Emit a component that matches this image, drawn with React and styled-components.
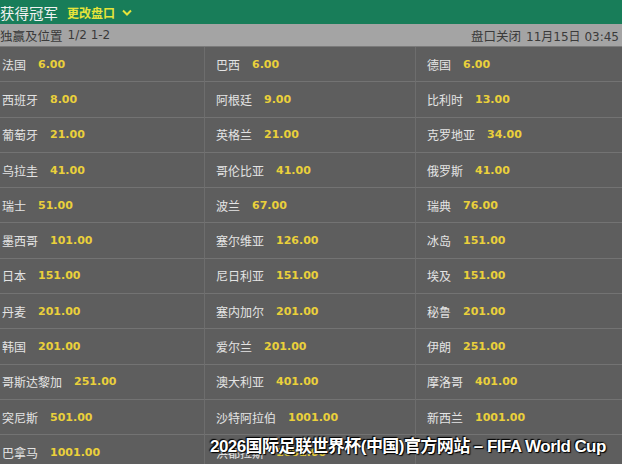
import React from 'react';
import styled, { createGlobalStyle } from 'styled-components';

const GlobalStyle = createGlobalStyle`
  html, body {
    margin: 0;
    padding: 0;
    background: #5e5e5e;
    overflow: hidden;
  }
  body {
    font-family: "Liberation Sans", "Noto Sans CJK SC", sans-serif;
  }
`;

const Page = styled.div`
  position: relative;
  width: 622px;
  height: 464px;
  overflow: hidden;
  background: #5e5e5e;
`;

const TopBar = styled.div`
  height: 24px;
  background: #187d59;
  display: flex;
  align-items: center;
  gap: 9px;
  padding-top: 1px;
  box-sizing: border-box;
`;

const Title = styled.span`
  color: #f2f2f2;
  font-size: 14.5px;
  font-family: "Noto Sans CJK SC", sans-serif;
`;

const ChangeLink = styled.span`
  color: #e6e43a;
  font-size: 12px;
  font-weight: bold;
  font-family: "Noto Sans CJK SC", sans-serif;
  display: flex;
  align-items: center;
  gap: 7px;
`;

const SubBar = styled.div`
  height: 22px;
  background: #a4a4a4;
  color: #3a3a3a;
  display: flex;
  align-items: center;
  justify-content: space-between;
  padding-right: 3px;
  font-size: 12px;
  font-family: "DejaVu Sans", "Noto Sans CJK SC", sans-serif;
  border-bottom: 1px solid #7a7a7a;
`;

const SubPart = styled.span`
  display: flex;
  align-items: center;
  gap: 5px;
  & b {
    font-weight: normal;
    font-size: 12.5px;
    font-family: "Noto Sans CJK SC", sans-serif;
  }
`;

const Grid = styled.div`
  display: grid;
  grid-template-columns: 205px 211px 1fr;
  grid-auto-rows: 35.3px;
`;

const Cell = styled.div`
  display: flex;
  align-items: center;
  gap: 12px;
  padding-left: ${p => (p.$first ? '2px' : '11px')};
  border-bottom: 1px solid #737373;
  border-right: ${p => (p.$last ? 'none' : '1px solid #6d6d6d')};
  box-sizing: border-box;
`;

const Name = styled.span`
  color: #e4e4e4;
  font-size: 12px;
  font-family: "Noto Sans CJK SC", sans-serif;
`;

const Odds = styled.span`
  color: #ead03b;
  font-size: 11px;
  font-weight: bold;
  font-family: "DejaVu Sans", sans-serif;
`;

const Watermark = styled.div`
  position: absolute;
  left: 210px;
  top: 432px;
  color: #ffffff;
  font-size: 17px;
  font-weight: bold;
  font-family: "Liberation Sans", "Noto Sans CJK SC", sans-serif;
  letter-spacing: -0.55px;
  white-space: nowrap;
  text-shadow: 0 0 2px #000, 1px 1px 1px #000, -1px -1px 1px #000;
`;

const teams = [
  ['法国', '6.00'], ['巴西', '6.00'], ['德国', '6.00'],
  ['西班牙', '8.00'], ['阿根廷', '9.00'], ['比利时', '13.00'],
  ['葡萄牙', '21.00'], ['英格兰', '21.00'], ['克罗地亚', '34.00'],
  ['乌拉圭', '41.00'], ['哥伦比亚', '41.00'], ['俄罗斯', '41.00'],
  ['瑞士', '51.00'], ['波兰', '67.00'], ['瑞典', '76.00'],
  ['墨西哥', '101.00'], ['塞尔维亚', '126.00'], ['冰岛', '151.00'],
  ['日本', '151.00'], ['尼日利亚', '151.00'], ['埃及', '151.00'],
  ['丹麦', '201.00'], ['塞内加尔', '201.00'], ['秘鲁', '201.00'],
  ['韩国', '201.00'], ['爱尔兰', '201.00'], ['伊朗', '251.00'],
  ['哥斯达黎加', '251.00'], ['澳大利亚', '401.00'], ['摩洛哥', '401.00'],
  ['突尼斯', '501.00'], ['沙特阿拉伯', '1001.00'], ['新西兰', '1001.00'],
  ['巴拿马', '1001.00'], ['洪都拉斯', '1001.00'], ['', ''],
];

const Chevron = () => (
  <svg width="10" height="7" viewBox="0 0 10 7">
    <path d="M1 1.5 L5 5.5 L9 1.5" fill="none" stroke="#e6e43a" strokeWidth="2" />
  </svg>
);

const App = () => (
  <Page>
    <GlobalStyle />
    <TopBar>
      <Title>获得冠军</Title>
      <ChangeLink>
        更改盘口 <Chevron />
      </ChangeLink>
    </TopBar>
    <SubBar>
      <SubPart>
        <b>独赢及位置</b>
        <span>1/2 1-2</span>
      </SubPart>
      <SubPart>
        <b>盘口关闭</b>
        <span>11月15日 03:45</span>
      </SubPart>
    </SubBar>
    <Grid>
      {teams.map(([name, odds], i) => (
        <Cell key={i} $first={i % 3 === 0} $last={i % 3 === 2}>
          <Name>{name}</Name>
          <Odds>{odds}</Odds>
        </Cell>
      ))}
    </Grid>
    <Watermark>2026国际足联世界杯(中国)官方网站 – FIFA World Cup</Watermark>
  </Page>
);

export default App;
